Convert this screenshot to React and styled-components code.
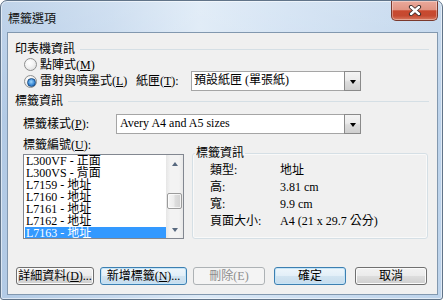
import React from "react";
import styled, { createGlobalStyle, css } from "styled-components";

const Global = createGlobalStyle`
  html, body { margin: 0; padding: 0; background: #ffffff; }
  body {
    font-family: "Liberation Serif", "Noto Sans CJK TC", serif;
    font-size: 12px;
    color: #000;
  }
  * { box-sizing: border-box; }
`;

const Window = styled.div`
  width: 443px;
  height: 300px;
  border: 1px solid #617489;
  border-radius: 7px 7px 3px 3px;
  background:
    linear-gradient(180deg, rgba(255,255,255,0.18) 0%, rgba(255,255,255,0) 40%),
    linear-gradient(90deg, #b2cae5 0%, #c6d9ee 25%, #dce9f6 45%, #cfe0f2 65%, #bdd3eb 100%);
  display: flex;
  flex-direction: column;
  box-shadow: inset 0 0 0 1px rgba(255,255,255,0.55);
  overflow: hidden;
`;

const TitleBar = styled.div`
  height: 31px;
  display: flex;
  align-items: flex-start;
  padding-left: 7px;
`;

const Title = styled.div`
  flex: 1;
  margin-top: 11px;
  line-height: 14px;
  height: 14px;
  color: #111;
`;

const CloseButton = styled.div`
  width: 47px;
  height: 20px;
  margin-right: 4px;
  border: 1px solid #7a392d;
  border-top: none;
  border-radius: 0 0 5px 5px;
  background: linear-gradient(180deg, #eaa99b 0%, #e19584 45%, #c9492f 52%, #c54a31 78%, #d97a60 100%);
  box-shadow: inset 0 0 0 1px rgba(255,255,255,0.35);
  display: flex;
  align-items: center;
  justify-content: center;
`;

const Client = styled.div`
  flex: 1;
  margin: 0 4px 4px 6px;
  border: 1px solid #8298af;
  background: #f0f0f0;
  display: flex;
  flex-direction: column;
`;

const SectionHeader = styled.div`
  display: flex;
  align-items: center;
  gap: 5px;
  height: 14px;
  line-height: 14px;
  margin: ${(p) => p.$top}px 8px 0 7px;
  white-space: nowrap;
  &::after {
    content: "";
    flex: 1;
    height: 1px;
    background: #d5dfe5;
    margin-top: 1px;
  }
`;

const Mn = styled.span`
  text-decoration: underline;
  text-underline-offset: 1px;
`;

const RadioRow = styled.div`
  display: flex;
  align-items: center;
  height: ${(p) => p.$h}px;
  margin-top: ${(p) => p.$top || 0}px;
  padding-left: 16px;
  line-height: 14px;
  white-space: nowrap;
`;

const Radio = styled.span`
  position: relative;
  width: 13px;
  height: 13px;
  border-radius: 50%;
  border: 1px solid #8e8f8f;
  background: radial-gradient(circle at 40% 35%, #ffffff 0%, #f4f4f4 40%, #d8d8d8 100%);
  margin-right: 3px;
  flex: none;
  ${(p) =>
    p.$checked &&
    css`
      &::after {
        content: "";
        position: absolute;
        left: 2px;
        top: 2px;
        width: 7px;
        height: 7px;
        border-radius: 50%;
        border: 1px solid #1c4f86;
        background: radial-gradient(circle at 45% 40%, #9ed6fb 0%, #3c8ad6 55%, #1b5da8 100%);
      }
    `}
`;

const FixedLabel = styled.span`
  display: inline-block;
  width: ${(p) => p.$w}px;
  flex: none;
  white-space: nowrap;
`;

const Combo = styled.div`
  width: ${(p) => p.$w}px;
  height: 20px;
  border: 1px solid #a5a5a5;
  background: #fff;
  display: flex;
  align-items: stretch;
  flex: none;
`;

const ComboText = styled.div`
  flex: 1;
  padding-left: ${(p) => p.$pad}px;
  line-height: 17px;
  white-space: nowrap;
  overflow: hidden;
`;

const ComboArrow = styled.div`
  width: 17px;
  border: 1px solid #8a8a8a;
  margin: -1px -1px -1px 0;
  background: linear-gradient(180deg, #f4f4f4 0%, #ebebeb 45%, #dcdcdc 55%, #cfcfcf 100%);
  display: flex;
  align-items: center;
  justify-content: center;
  &::after {
    content: "";
    width: 0;
    height: 0;
    border-left: 3.5px solid transparent;
    border-right: 3.5px solid transparent;
    border-top: 4px solid #000;
    margin-top: 1px;
  }
`;

const FieldRow = styled.div`
  display: flex;
  align-items: center;
  height: 20px;
  margin-top: 6px;
  padding-left: 15px;
  line-height: 14px;
`;

const Columns = styled.div`
  display: flex;
  align-items: flex-start;
  gap: 8px;
  padding-left: 15px;
`;

const LeftColumn = styled.div`
  width: 161px;
  display: flex;
  flex-direction: column;
`;

const ColumnLabel = styled.div`
  margin-top: 4px;
  height: 14px;
  line-height: 14px;
  white-space: nowrap;
`;

const ListBox = styled.div`
  margin-top: 2px;
  height: 85px;
  border: 1px solid #828790;
  background: #fff;
  display: flex;
`;

const ListItems = styled.div`
  flex: 1;
  margin-left: 1px;
  display: flex;
  flex-direction: column;
  overflow: hidden;
`;

const ListItem = styled.div`
  height: 12px;
  line-height: 12px;
  padding-left: 1px;
  white-space: nowrap;
  ${(p) =>
    p.$selected &&
    css`
      background: #3399ff;
      color: #fff;
    `}
`;

const ScrollBar = styled.div`
  width: 17px;
  display: flex;
  flex-direction: column;
  background: linear-gradient(90deg, #e6e6e6 0%, #f3f3f3 25%, #f3f3f3 75%, #e8e8e8 100%);
`;

const ScrollArrow = styled.div`
  height: 17px;
  display: flex;
  align-items: center;
  justify-content: center;
  &::after {
    content: "";
    width: 0;
    height: 0;
    border-left: 3.5px solid transparent;
    border-right: 3.5px solid transparent;
    ${(p) =>
      p.$up
        ? css`border-bottom: 4px solid #58697f;`
        : css`border-top: 4px solid #58697f;`}
  }
`;

const ScrollTrack = styled.div`
  flex: 1;
  padding: 21px 1px 0 1px;
`;

const Thumb = styled.div`
  height: 16px;
  border: 1px solid #9b9b9b;
  border-radius: 2px;
  background: linear-gradient(90deg, #f6f6f6 0%, #ececec 45%, #dddddd 55%, #d2d2d2 100%);
  box-shadow: inset 0 0 0 1px rgba(255,255,255,0.7);
`;

const Group = styled.fieldset`
  margin: 12px 0 0 0;
  padding: 0;
  width: 236px;
  height: 93px;
  border: 1px solid #d5dfe5;
  border-radius: 3px;
  box-shadow: inset 0 0 0 1px rgba(255,255,255,0.6);
`;

const Legend = styled.legend`
  margin-left: 2px;
  padding: 0 1px;
  line-height: 14px;
  height: 14px;
`;

const InfoRows = styled.div`
  margin-top: 2px;
  padding-left: 17px;
  display: flex;
  flex-direction: column;
`;

const InfoRow = styled.div`
  display: flex;
  height: 17px;
  line-height: 17px;
  white-space: nowrap;
`;

const InfoKey = styled.span`
  width: 70px;
  flex: none;
`;

const ButtonRow = styled.div`
  display: flex;
  margin-top: 28px;
  padding-left: 8px;
  gap: 6px;
`;

const Button = styled.div`
  width: ${(p) => p.$w}px;
  margin-left: ${(p) => p.$ml || 0}px;
  height: 18px;
  border: 1px solid #707070;
  border-radius: 3px;
  background: linear-gradient(180deg, #f2f2f2 0%, #ebebeb 48%, #dddddd 52%, #cfcfcf 100%);
  box-shadow: inset 0 0 0 1px #fbfbfb;
  display: flex;
  align-items: center;
  justify-content: center;
  line-height: 14px;
  white-space: nowrap;
  ${(p) =>
    p.$accent &&
    css`
      border-color: #3c7fb1;
      box-shadow: inset 0 0 0 1px #c5e4f7;
      background: linear-gradient(180deg, #eef6fb 0%, #e3eff8 48%, #d2e4f1 52%, #c6dced 100%);
    `}
  ${(p) =>
    p.$disabled &&
    css`
      border-color: #adb2b5;
      background: #f4f4f4;
      box-shadow: none;
      color: #8d8d8d;
    `}
`;

const CloseIcon = () => (
  <svg width="14" height="11" viewBox="0 0 14 11">
    <path d="M3 2 L11 9 M11 2 L3 9" stroke="#3a2a28" strokeWidth="4.2" strokeLinecap="round" fill="none" />
    <path d="M3 2 L11 9 M11 2 L3 9" stroke="#ffffff" strokeWidth="2.4" strokeLinecap="round" fill="none" />
  </svg>
);

const labels = [
  "L300VF - 正面",
  "L300VS - 背面",
  "L7159 - 地址",
  "L7160 - 地址",
  "L7161 - 地址",
  "L7162 - 地址",
  "L7163 - 地址",
];

const info = [
  ["類型:", "地址"],
  ["高:", "3.81 cm"],
  ["寬:", "9.9 cm"],
  ["頁面大小:", "A4 (21 x 29.7 公分)"],
];

export default function App() {
  return (
    <>
      <Global />
      <Window>
        <TitleBar>
          <Title>標籤選項</Title>
          <CloseButton>
            <CloseIcon />
          </CloseButton>
        </TitleBar>
        <Client>
          <SectionHeader $top={9}>印表機資訊</SectionHeader>
          <RadioRow $h={13} $top={2}>
            <Radio />
            點陣式(<Mn>M</Mn>)
          </RadioRow>
          <RadioRow $h={20}>
            <Radio $checked />
            <FixedLabel $w={96}>
              雷射與噴墨式(<Mn>L</Mn>)
            </FixedLabel>
            <FixedLabel $w={55}>
              紙匣(<Mn>T</Mn>):
            </FixedLabel>
            <Combo $w={170}>
              <ComboText $pad={2}>預設紙匣 (單張紙)</ComboText>
              <ComboArrow />
            </Combo>
          </RadioRow>
          <SectionHeader $top={3}>標籤資訊</SectionHeader>
          <FieldRow>
            <FixedLabel $w={93}>
              標籤樣式(<Mn>P</Mn>):
            </FixedLabel>
            <Combo $w={245}>
              <ComboText $pad={3}>Avery A4 and A5 sizes</ComboText>
              <ComboArrow />
            </Combo>
          </FieldRow>
          <Columns>
            <LeftColumn>
              <ColumnLabel>
                標籤編號(<Mn>U</Mn>):
              </ColumnLabel>
              <ListBox>
                <ListItems>
                  {labels.map((l, i) => (
                    <ListItem key={l} $selected={i === labels.length - 1}>
                      {l}
                    </ListItem>
                  ))}
                </ListItems>
                <ScrollBar>
                  <ScrollArrow $up />
                  <ScrollTrack>
                    <Thumb />
                  </ScrollTrack>
                  <ScrollArrow />
                </ScrollBar>
              </ListBox>
            </LeftColumn>
            <Group>
              <Legend>標籤資訊</Legend>
              <InfoRows>
                {info.map(([k, v]) => (
                  <InfoRow key={k}>
                    <InfoKey>{k}</InfoKey>
                    <span>{v}</span>
                  </InfoRow>
                ))}
              </InfoRows>
            </Group>
          </Columns>
          <ButtonRow>
            <Button $w={78}>
              詳細資料(<Mn>D</Mn>)...
            </Button>
            <Button $w={87} $accent>
              新增標籤(<Mn>N</Mn>)...
            </Button>
            <Button $w={72} $disabled>
              刪除(E)
            </Button>
            <Button $w={72} $ml={3} $accent>
              確定
            </Button>
            <Button $w={72} $ml={3}>
              取消
            </Button>
          </ButtonRow>
        </Client>
      </Window>
    </>
  );
}
